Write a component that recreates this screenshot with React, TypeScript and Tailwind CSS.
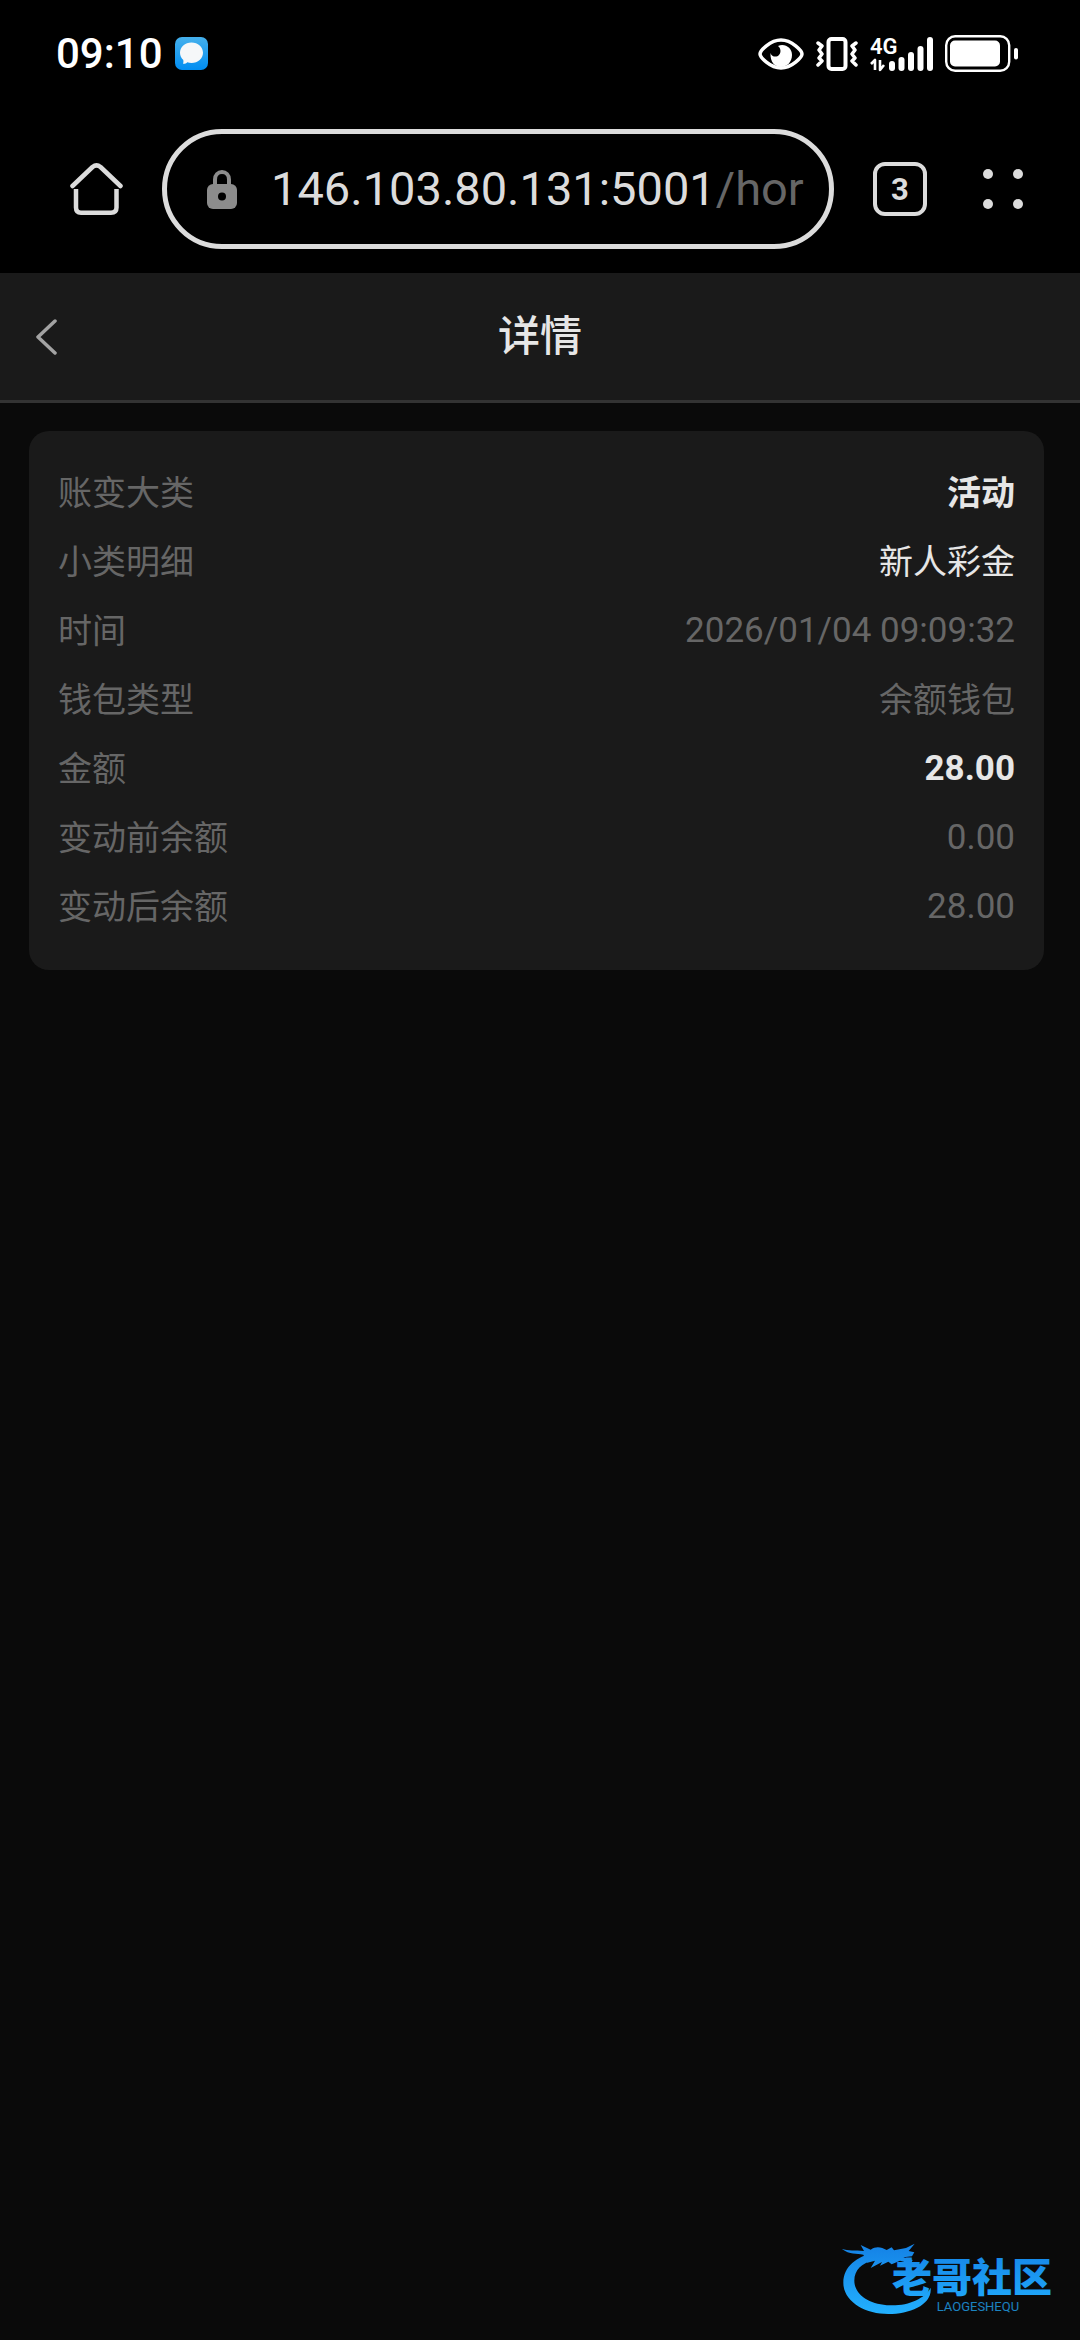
import type { ReactNode } from "react";

type DetailRow = {
  label: string;
  value: string;
  valueClass: string;
};

const rows: DetailRow[] = [
  {
    label: "账变大类",
    value: "活动",
    valueClass: "font-bold text-[34px] text-[#e6e6e6]",
  },
  {
    label: "小类明细",
    value: "新人彩金",
    valueClass: "text-[34px] text-[#e6e6e6]",
  },
  {
    label: "时间",
    value: "2026/01/04 09:09:32",
    valueClass: "text-[35px] text-[#666666]",
  },
  {
    label: "钱包类型",
    value: "余额钱包",
    valueClass: "text-[34px] text-[#666666]",
  },
  {
    label: "金额",
    value: "28.00",
    valueClass: "font-bold text-[35px] text-[#e6e6e6]",
  },
  {
    label: "变动前余额",
    value: "0.00",
    valueClass: "text-[35px] text-[#666666]",
  },
  {
    label: "变动后余额",
    value: "28.00",
    valueClass: "text-[35px] text-[#666666]",
  },
];

function MessageIcon() {
  return (
    <svg width="33" height="33" viewBox="0 0 33 33" aria-hidden="true">
      <defs>
        <linearGradient id="message" x1="0" y1="0" x2="0" y2="1">
          <stop offset="0" stopColor="#45b0ec" />
          <stop offset="1" stopColor="#008df2" />
        </linearGradient>
      </defs>
      <rect width="33" height="33" rx="7" fill="url(#message)" />
      <path
        d="M16.5 5.5C23 5.5 28 10 28 15.800S23 26 16.5 26C15 26 13.6 25.800 12.3 25.300C11.2 26.5 9.5 27 8 26.800C8.5 25.600 8.6 24.300 8.3 23C6.2 21.200 5 18.700 5 15.800C5 10 10 5.5 16.5 5.5Z"
        fill="#f5f7f9"
      />
    </svg>
  );
}

function EyeIcon() {
  return (
    <svg width="46" height="32" viewBox="0 0 46 32" aria-hidden="true">
      <path
        d="M2 16C2 13 12 2 23 2S44 13 44 16S34 30 23 30S2 19 2 16Z"
        fill="none"
        stroke="#fff"
        strokeWidth="3.5"
      />
      <path
        d="M20 8C27 5 34 10 34 17C34 24 29 29 23 29S12 24 12.5 15C13.5 18 16 19 18.5 18.5C23 17.5 24 11 20 8Z"
        fill="#fff"
      />
    </svg>
  );
}

function VibrateIcon() {
  return (
    <svg
      width="42"
      height="34"
      viewBox="0 0 42 34"
      fill="none"
      stroke="#fff"
      aria-hidden="true"
    >
      <rect x="12.5" y="2" width="17" height="30" rx="3" strokeWidth="4" />
      <path
        d="M2 6L6 9L3 13L6 17L3 21L6 24L2 28M40 6L36 9L39 13L36 17L39 21L36 24L40 28"
        strokeWidth="3.5"
        strokeLinecap="round"
        strokeLinejoin="round"
      />
    </svg>
  );
}

function SignalIcon() {
  return (
    <svg width="63" height="46" viewBox="0 -6 63 46" fill="#fff" aria-hidden="true">
      <text
        x="0"
        y="17"
        fontFamily="Roboto, sans-serif"
        fontSize="22"
        fontWeight="600"
      >
        4G
      </text>
      <path
        d="M1 27L5 23V33M10 23V33L14 28"
        fill="none"
        stroke="#fff"
        strokeWidth="2.6"
        strokeLinejoin="round"
      />
      <rect x="19" y="24" width="6" height="10" rx="3" />
      <rect x="28.5" y="20" width="6" height="14" rx="3" />
      <rect x="38" y="15" width="6" height="19" rx="3" />
      <rect x="47.5" y="9" width="6" height="25" rx="3" />
      <rect x="57" y="0" width="6" height="34" rx="3" />
    </svg>
  );
}

function BatteryIcon() {
  return (
    <svg width="73" height="37" viewBox="0 0 73 37" aria-hidden="true">
      <rect
        x="1.2"
        y="1.2"
        width="63"
        height="34.5"
        rx="9"
        fill="none"
        stroke="#fff"
        strokeWidth="2.4"
      />
      <rect x="5" y="5.5" width="50" height="26" rx="5" fill="#fff" />
      <rect x="69" y="13" width="4" height="11.5" rx="2" fill="#fff" />
    </svg>
  );
}

function HomeIcon() {
  return (
    <svg
      width="53"
      height="52"
      viewBox="0 0 53 52"
      fill="none"
      stroke="#dcdcdc"
      strokeWidth="4.5"
      aria-hidden="true"
    >
      <path
        d="M2.5 23L22.5 4Q26.5 0.8 30.5 4L50.5 23"
        strokeLinecap="round"
        strokeLinejoin="round"
      />
      <path d="M6 26V44.5Q6 49.7 11 49.7H41Q46.5 49.7 46.5 44.5V26" />
    </svg>
  );
}

function LockIcon() {
  return (
    <svg
      className="shrink-0"
      width="30"
      height="39"
      viewBox="0 0 30 39"
      aria-hidden="true"
    >
      <path
        d="M8 16V9.5C8 5 11 2 15 2S22 5 22 9.5V16"
        fill="none"
        stroke="#8c8c8c"
        strokeWidth="4"
      />
      <rect y="14" width="30" height="25" rx="6" fill="#8c8c8c" />
      <circle cx="15" cy="26.5" r="4" fill="#000" />
    </svg>
  );
}

function MenuIcon() {
  return (
    <svg width="40" height="40" viewBox="0 0 40 40" fill="#dcdcdc" aria-hidden="true">
      <circle cx="5" cy="5" r="5" />
      <circle cx="35" cy="5" r="5" />
      <circle cx="5" cy="35" r="5" />
      <circle cx="35" cy="35" r="5" />
    </svg>
  );
}

function CommunityLogo() {
  return (
    <svg width="227" height="77" viewBox="60 60 681 231" role="img" aria-label="老哥社区">
      <defs>
        <linearGradient
          id="logo"
          gradientUnits="userSpaceOnUse"
          x1="0"
          y1="80"
          x2="0"
          y2="280"
        >
          <stop offset="0" stopColor="#1583e6" />
          <stop offset="1" stopColor="#22b0ff" />
        </linearGradient>
      </defs>
      <g fill="url(#logo)">
        <path d="M165 98C110 108 70 140 70 188C70 245 135 282 205 282C270 282 337 255 332 203C315 235 265 258 210 256C150 254 103 225 103 182C103 150 125 130 160 120Z" />
        <path d="M65 86C85 94 105 89 132 93L122 75L152 89C170 76 185 82 200 90L215 82L222 91L258 84L284 71L266 93L283 97L276 109L250 112L278 120L272 131L240 122L215 133L205 125L180 137L186 126L152 144L165 122L142 128L130 104C110 98 90 106 65 86Z" />
        <text
          x="216"
          y="216"
          fontFamily="Noto Sans CJK SC, sans-serif"
          fontSize="120"
          fontWeight="900"
        >
          老哥社区
        </text>
        <text
          x="350"
          y="272"
          fontFamily="Roboto, sans-serif"
          fontSize="39"
          fillOpacity="0.75"
        >
          LAOGESHEQU
        </text>
      </g>
    </svg>
  );
}

function StatusBar() {
  return (
    <div className="flex h-[107px] items-center pr-[62px] pl-14">
      <span className="text-[42px] leading-none font-medium text-white">
        09:10
      </span>
      <div className="ml-3">
        <MessageIcon />
      </div>
      <div className="ml-auto flex items-center gap-3">
        <EyeIcon />
        <VibrateIcon />
        <SignalIcon />
        <BatteryIcon />
      </div>
    </div>
  );
}

function IconButton({ label, children }: { label: string; children: ReactNode }) {
  return (
    <button type="button" aria-label={label} className="shrink-0">
      {children}
    </button>
  );
}

function BrowserBar() {
  return (
    <div className="flex items-center gap-[39px] pt-[22px] pr-[57px] pb-6 pl-[70px]">
      <IconButton label="主页">
        <HomeIcon />
      </IconButton>
      <label
        aria-label="网址"
        className="flex h-[120px] min-w-0 flex-1 items-center rounded-full border-5 border-[#dcdcdc] pr-2 pl-10"
      >
        <LockIcon />
        <span className="ml-[34px] flex min-w-0 flex-1 overflow-hidden text-[47px] text-[#dcdcdc]">
          <input
            type="text"
            aria-label="网址"
            defaultValue="146.103.80.131:5001"
            className="field-sizing-content shrink-0 outline-none"
          />
          <span className="text-[#666666]">/hor</span>
        </span>
      </label>
      <button
        type="button"
        aria-label="标签页"
        className="flex size-[54px] shrink-0 items-center justify-center rounded-xl border-4 border-[#dcdcdc] text-[31px] leading-none font-bold text-[#dcdcdc]"
      >
        3
      </button>
      <div className="ml-[17px] flex">
        <IconButton label="菜单">
          <MenuIcon />
        </IconButton>
      </div>
    </div>
  );
}

function PageHeader() {
  return (
    <header className="grid h-[130px] grid-cols-3 items-center border-b-3 border-[#333333] bg-[#1a1a1a] px-9">
      <button type="button" aria-label="返回" className="justify-self-start">
        <svg
          width="22"
          height="36"
          viewBox="0 0 22 36"
          fill="none"
          stroke="#a3a3a3"
          strokeWidth="3.5"
          strokeLinecap="round"
          strokeLinejoin="round"
          aria-hidden="true"
        >
          <path d="M19 2L2 18L19 34" />
        </svg>
      </button>
      <h1 className="text-center text-[42px] leading-none font-medium text-[#e6e6e6]">
        详情
      </h1>
    </header>
  );
}

function App() {
  return (
    <div className="relative flex min-h-screen flex-col bg-[#0a0a0a] font-[Roboto,'Noto_Sans_CJK_SC',sans-serif]">
      <div className="bg-black">
        <StatusBar />
        <BrowserBar />
      </div>
      <PageHeader />
      <main className="pt-7 pr-9 pl-[29px]">
        <dl className="rounded-[20px] bg-[#1a1a1a] px-[29px] py-7">
          {rows.map((row) => (
            <div
              key={row.label}
              className="flex h-[69px] items-center justify-between"
            >
              <dt className="text-[34px] text-[#666666]">{row.label}</dt>
              <dd className={row.valueClass}>{row.value}</dd>
            </div>
          ))}
        </dl>
      </main>
      <div className="absolute right-[13px] bottom-[23px]">
        <CommunityLogo />
      </div>
    </div>
  );
}

export default App;
